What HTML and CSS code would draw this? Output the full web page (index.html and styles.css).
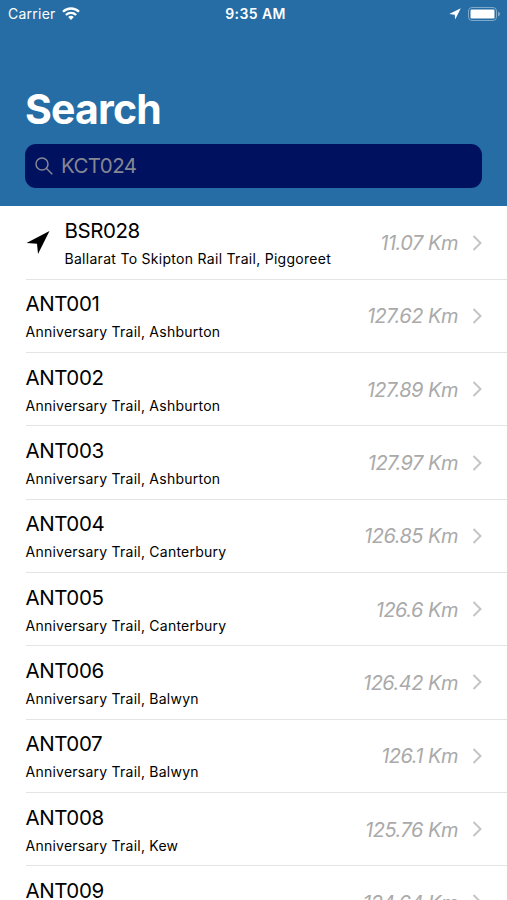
FILE: index.html
```
<!DOCTYPE html>
<html lang="en">
<head>
<meta charset="utf-8">
<title>Search</title>
<link rel="stylesheet" href="styles.css">
</head>
<body>
<header class="header">
  <div class="status">
    <div class="status-left"><span class="carrier">Carrier</span>
      <svg class="wifi" viewBox="0 0 18 13" width="18" height="13"><g fill="none" stroke="#fff" stroke-width="2.3"><path d="M1 4.8a11.3 11.3 0 0 1 16 0"/><path d="M3.9 8a7.2 7.2 0 0 1 10.2 0"/></g><path fill="#fff" d="M9 13 6.2 10.1a4 4 0 0 1 5.6 0z"/></svg>
    </div>
    <span class="time">9:35 AM</span>
    <div class="status-right">
      <svg width="12" height="12" viewBox="0 0 12 12"><path fill="#fff" d="M11.8.2 6.2 11.5 5.7 6.7.2 5.9z"/></svg>
      <svg width="32" height="14" viewBox="0 0 32 14"><rect x=".5" y=".5" width="28" height="13" rx="3.5" fill="none" stroke="#7fa9c9"/><rect x="2.5" y="2.5" width="24" height="9" rx="1.2" fill="#fff"/><path fill="#7fa9c9" d="M30 4.5q2 .7 2 2.5t-2 2.5z"/></svg>
    </div>
  </div>
  <h1 class="title">Search</h1>
  <div class="search">
    <svg width="18" height="18" viewBox="0 0 18 18" fill="none" stroke="#858793" stroke-width="1.5"><circle cx="7" cy="7" r="6"/><path d="m11.3 11.3 6 6"/></svg>
    <span class="query">KCT024</span>
  </div>
</header>
<main class="list" id="list"></main>
<script src="list.js"></script>
</body>
</html>
```
FILE: styles.css
```
* { box-sizing: border-box; }
body { margin: 0; height: 900px; overflow: hidden; background: #fff; color: #000; font-family: Inter, "Liberation Sans", sans-serif; }
.header { height: 206px; background: #256da4; color: #fff; }
.status { height: 27px; padding: 0 7px 0 8px; display: grid; grid-template-columns: 1fr auto 1fr; align-items: center; font-size: 14px; }
.status-left, .status-right { display: flex; align-items: center; gap: 6px; }
.status-right { justify-content: flex-end; gap: 7px; }
.status svg { display: block; }
.carrier { letter-spacing: 0.25px; }
.time { font-weight: 600; letter-spacing: 0.4px; padding-left: 3px; }
.title { margin: 57px 0 0 25px; font-size: 41px; line-height: 50px; font-weight: 700; letter-spacing: -0.8px; }
.search { margin: 10px 25px 0; height: 43.5px; border-radius: 11px; background: #00125f; display: flex; align-items: center; padding-left: 10px; gap: 8px; }
.query { color: #858793; font-size: 20.5px; letter-spacing: -0.6px; }
.list { padding-top: 0.5px; }
.row { height: 73.3px; display: flex; align-items: center; padding-right: 25px; margin-left: 25.5px; border-bottom: 1px solid #e4e4e6; }
.arrow { margin-right: 15px; }
.info { flex: 1; padding-top: 1px; }
.code { font-size: 20.5px; line-height: 28px; letter-spacing: -0.42px; }
.place { font-size: 14px; line-height: 20px; margin-top: 4px; letter-spacing: 0.24px; white-space: nowrap; }
.row:first-child .place { letter-spacing: 0.29px; }
.distance { color: #aaa; font-size: 20px; font-style: italic; letter-spacing: -0.5px; margin-right: 14px; padding-top: 1px; }
```
FILE: list.js
```
const rows = [
  ["BSR028", "Ballarat To Skipton Rail Trail, Piggoreet", "11.07"],
  ["ANT001", "Anniversary Trail, Ashburton", "127.62"],
  ["ANT002", "Anniversary Trail, Ashburton", "127.89"],
  ["ANT003", "Anniversary Trail, Ashburton", "127.97"],
  ["ANT004", "Anniversary Trail, Canterbury", "126.85"],
  ["ANT005", "Anniversary Trail, Canterbury", "126.6"],
  ["ANT006", "Anniversary Trail, Balwyn", "126.42"],
  ["ANT007", "Anniversary Trail, Balwyn", "126.1"],
  ["ANT008", "Anniversary Trail, Kew", "125.76"],
  ["ANT009", "Anniversary Trail, Kew", "124.64"]
];
const arrow = '<svg class="arrow" width="24" height="24" viewBox="0 0 24 24"><path d="M23.5 0 12 23 11 12.8.5 12z"/></svg>';
const chevron = '<svg class="chevron" width="10" height="16" viewBox="0 0 10 16" fill="none" stroke="#c4c4c7" stroke-width="2"><path d="m1.5 1 7 7-7 7"/></svg>';
document.getElementById("list").innerHTML = rows.map(([code, place, km], i) =>
  `<div class="row">${i ? "" : arrow}<div class="info"><div class="code">${code}</div><div class="place">${place}</div></div><span class="distance">${km} Km</span>${chevron}</div>`
).join("");
```
